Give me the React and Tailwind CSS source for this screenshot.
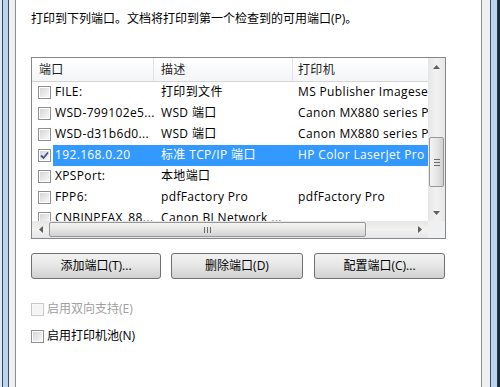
import React from 'react'

const rows = [
    { port: 'FILE:', desc: '打印到文件', printer: 'MS Publisher Imagesetter' },
    { port: 'WSD-799102e5...', desc: 'WSD 端口', printer: 'Canon MX880 series Printer' },
    { port: 'WSD-d31b6d0...', desc: 'WSD 端口', printer: 'Canon MX880 series Printer' },
    { port: '192.168.0.20', desc: '标准 TCP/IP 端口', printer: 'HP Color LaserJet Pro MFP', checked: true, selected: true },
    { port: 'XPSPort:', desc: '本地端口', printer: '' },
    { port: 'FPP6:', desc: 'pdfFactory Pro', printer: 'pdfFactory Pro' },
    { port: 'CNBJNPFAX_88...', desc: 'Canon BJ Network ...', printer: '' },
]

const CheckBox = ({ checked, disabled }) => (
    <span className={disabled
        ? 'flex w-[13px] h-[13px] border border-[#c9c9c9] bg-[#f7f7f7] p-[1px]'
        : 'flex w-[13px] h-[13px] border border-[#8e8f8f] bg-white p-[1px]'}>
        <span className={disabled
            ? 'flex-1 flex items-center justify-center bg-[#f4f4f4]'
            : 'flex-1 flex items-center justify-center bg-gradient-to-br from-[#d6d6d6] to-[#f8f8f8]'}>
            {checked && (
                <svg width="9" height="9" viewBox="0 0 9 9">
                    <path d="M1 4.5 L3.5 7 L8 1.5" fill="none" stroke="#3f4f8c" strokeWidth="1.8" />
                </svg>
            )}
        </span>
    </span>
)

const Arrow = ({ dir }) => {
    const pts = {
        up: '0,4 3.5,0 7,4',
        down: '0,0 3.5,4 7,0',
        left: '4,0 0,3.5 4,7',
        right: '0,0 4,3.5 0,7',
    }[dir]
    const vertical = dir === 'up' || dir === 'down'
    return (
        <svg width={vertical ? 7 : 4} height={vertical ? 4 : 7} viewBox={vertical ? '0 0 7 4' : '0 0 4 7'}>
            <polygon points={pts} fill="#606060" />
        </svg>
    )
}

const FrameLeft = () => (
    <div className="flex h-full shrink-0">
        <div className="w-[2px] bg-[#dfe9f5]"></div>
        <div className="w-[1px] bg-[#34495e]"></div>
        <div className="w-[5px] bg-[#bcd5ef]"></div>
        <div className="w-[1px] bg-[#3a4d62]"></div>
        <div className="w-[6px] bg-[#f0f0f0]"></div>
    </div>
)

const FrameRight = () => (
    <div className="flex h-full shrink-0">
        <div className="w-[8px] bg-[#f0f0f0]"></div>
        <div className="w-[1px] bg-[#3a4d62]"></div>
        <div className="w-[6px] bg-[#b7d4f2]"></div>
        <div className="w-[1px] bg-[#2c3947]"></div>
        <div className="w-[2px] bg-[#1f2933]"></div>
    </div>
)

const WinButton = ({ children, width }) => (
    <button className={`${width} h-[26px] rounded-[3px] border border-[#707070] bg-gradient-to-b from-[#f2f2f2] via-[#e6e6e6] to-[#d0d0d0] text-[12px] text-black`}>
        {children}
    </button>
)

const App = () => {
    return (
        <div className="w-[500px] h-[387px] flex overflow-hidden bg-[#f0f0f0] font-['Open_Sans','Noto_Sans_CJK_SC',sans-serif] text-[12px] text-black">
            <FrameLeft />

            <div className="w-[467px] h-full shrink-0 border-x border-[#898c95] bg-white pl-[15px] pt-[11px]">
                <p className="leading-[16px] whitespace-nowrap">打印到下列端口。文档将打印到第一个检查到的可用端口(P)。</p>

                {/* Port list */}
                <div className="mt-[30px] w-[415px] h-[182px] border border-[#828790] flex flex-col">
                    <div className="flex h-[163px]">
                        <div className="w-[396px] overflow-hidden tracking-[0.35px]">
                            <div className="flex h-[24px] border-b border-[#d5d5d5] bg-gradient-to-b from-white to-[#f4f5f7] text-[#1e1e1e] whitespace-nowrap">
                                <div className="w-[122px] shrink-0 border-r border-[#e2e3e5] pl-[7px] flex items-center">端口</div>
                                <div className="w-[139px] shrink-0 border-r border-[#e2e3e5] pl-[7px] flex items-center">描述</div>
                                <div className="w-[200px] shrink-0 pl-[5px] flex items-center">打印机</div>
                            </div>
                            {rows.map((r) => (
                                <div key={r.port} className="flex h-[21px] items-center whitespace-nowrap">
                                    <div className="w-[21px] shrink-0 pl-[6px]">
                                        <CheckBox checked={r.checked} />
                                    </div>
                                    <div className={r.selected
                                        ? 'flex h-full items-center bg-[#3399ff] text-white'
                                        : 'flex h-full items-center'}>
                                        <div className="w-[101px] shrink-0 pl-[2px] pb-[1px] overflow-hidden">{r.port}</div>
                                        <div className="w-[139px] shrink-0 pl-[7px] pb-[1px] overflow-hidden">{r.desc}</div>
                                        <div className="w-[200px] shrink-0 pl-[5px] pb-[1px]">{r.printer}</div>
                                    </div>
                                </div>
                            ))}
                        </div>

                        {/* vertical scrollbar */}
                        <div className="w-[17px] flex flex-col bg-gradient-to-r from-[#e6e6e6] via-[#f2f2f2] to-[#e6e6e6]">
                            <div className="h-[17px] flex items-center justify-center"><Arrow dir="up" /></div>
                            <div className="h-[62px]"></div>
                            <div className="h-[50px] mx-[1px] rounded-[2px] border border-[#979797] bg-gradient-to-r from-[#f4f4f4] via-[#e6e6e6] to-[#d2d2d2] flex flex-col items-center justify-center gap-[2px]">
                                <div className="w-[6px] h-[1px] bg-[#6a6a6a]"></div>
                                <div className="w-[6px] h-[1px] bg-[#6a6a6a]"></div>
                                <div className="w-[6px] h-[1px] bg-[#6a6a6a]"></div>
                            </div>
                            <div className="flex-1"></div>
                            <div className="h-[17px] flex items-center justify-center"><Arrow dir="down" /></div>
                        </div>
                    </div>

                    {/* horizontal scrollbar */}
                    <div className="flex h-[17px]">
                        <div className="w-[396px] flex items-center bg-gradient-to-b from-[#e6e6e6] via-[#f2f2f2] to-[#e6e6e6]">
                            <div className="w-[17px] h-full flex items-center justify-center"><Arrow dir="left" /></div>
                            <div className="w-[317px] h-[15px] rounded-[2px] border border-[#979797] bg-gradient-to-b from-[#f4f4f4] via-[#e6e6e6] to-[#d2d2d2] flex items-center justify-center gap-[2px]">
                                <div className="w-[1px] h-[6px] bg-[#6a6a6a]"></div>
                                <div className="w-[1px] h-[6px] bg-[#6a6a6a]"></div>
                                <div className="w-[1px] h-[6px] bg-[#6a6a6a]"></div>
                            </div>
                            <div className="flex-1"></div>
                            <div className="w-[17px] h-full flex items-center justify-center"><Arrow dir="right" /></div>
                        </div>
                        <div className="w-[17px] bg-[#f0f0f0]"></div>
                    </div>
                </div>

                {/* Buttons */}
                <div className="mt-[14px] flex">
                    <WinButton width="w-[130px]">添加端口(T)...</WinButton>
                    <div className="ml-[10px]"><WinButton width="w-[132px]">删除端口(D)</WinButton></div>
                    <div className="ml-[11px]"><WinButton width="w-[131px]">配置端口(C)...</WinButton></div>
                </div>

                {/* Options */}
                <div className="mt-[22px] flex items-center gap-[3px] h-[16px] text-[#a0a0a0]">
                    <CheckBox disabled />
                    <span>启用双向支持(E)</span>
                </div>
                <div className="mt-[11px] flex items-center gap-[3px] h-[16px]">
                    <CheckBox />
                    <span>启用打印机池(N)</span>
                </div>
            </div>

            <FrameRight />
        </div>
    )
}

export default App
